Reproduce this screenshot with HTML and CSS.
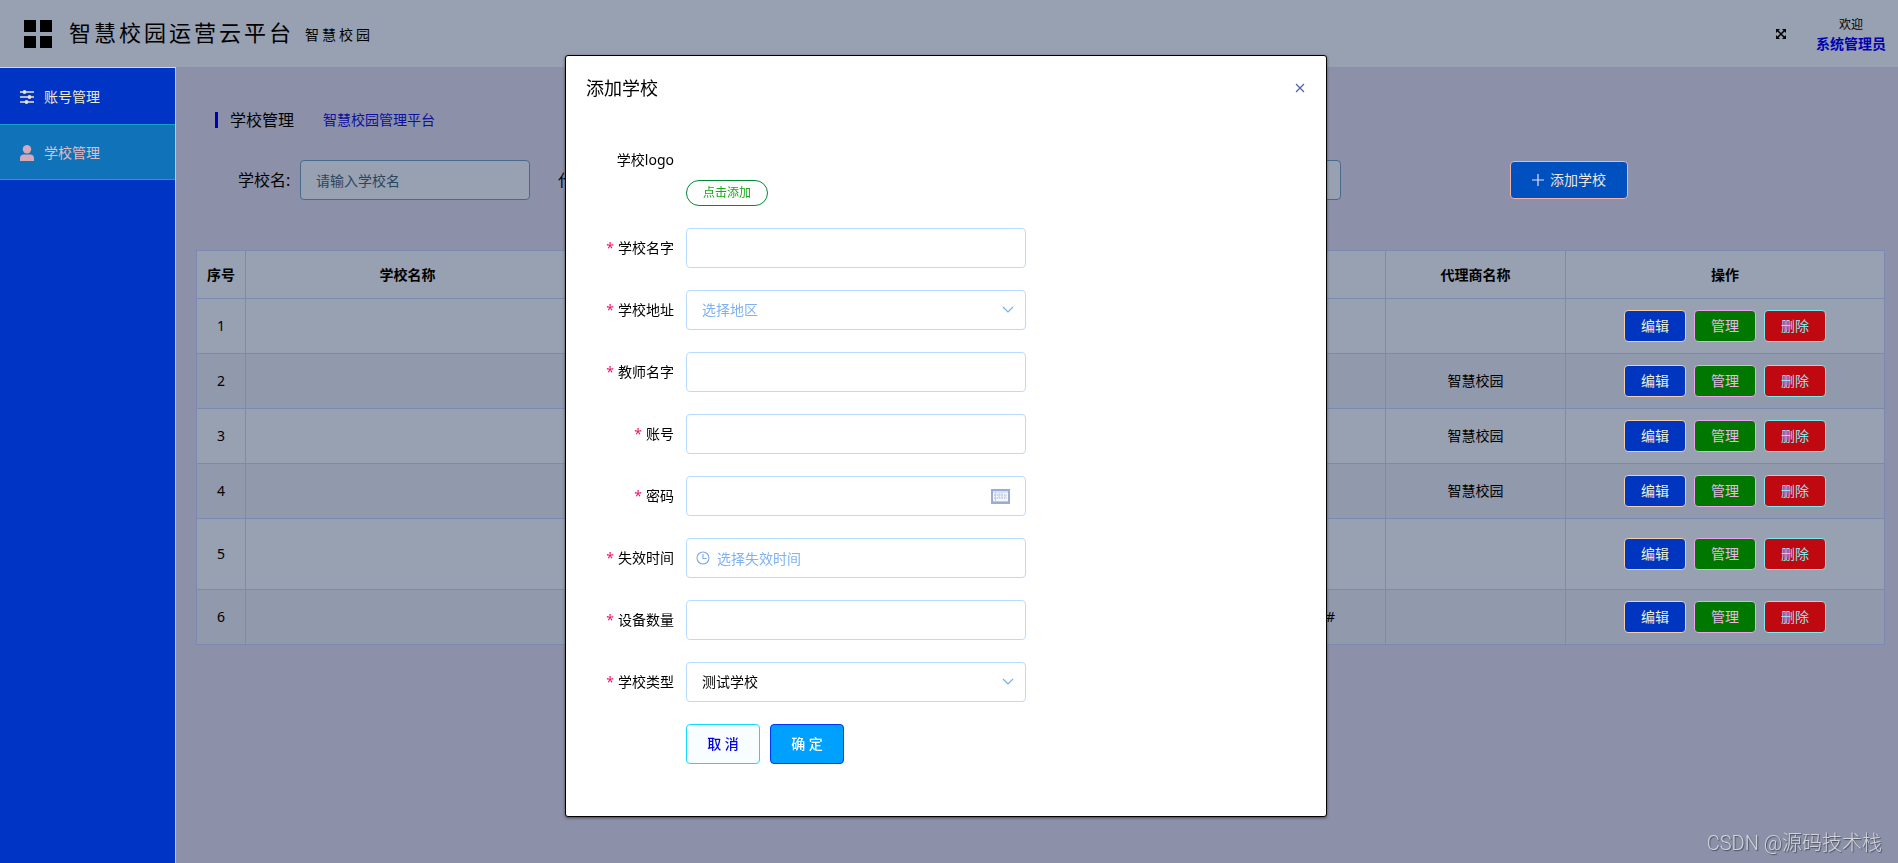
FILE: index.html
```html
<!DOCTYPE html>
<html lang="zh-CN">
<head>
<meta charset="utf-8">
<title>智慧校园运营云平台</title>
<link rel="stylesheet" href="styles.css">
</head>
<body>
<div class="app">
  <header class="topbar">
    <svg class="logo" viewBox="0 0 28 28" aria-hidden="true"><path d="M0 0h12v12H0zM16 0h12v12H16zM0 16h12v12H0zM16 16h12v12H16z"/></svg>
    <h1 class="brand">智慧校园运营云平台</h1>
    <span class="brand-sub">智慧校园</span>
    <div class="user-area">
      <button class="icon-btn" type="button" aria-label="全屏">
        <svg class="full-icon" viewBox="0 0 10 10" aria-hidden="true"><path d="M1 1l8 8M9 1L1 9" stroke="#000" stroke-width="1.5"/><path d="M0 0h4L0 4zM10 0v4L6 0zM0 10V6l4 4zM10 10H6l4-4z"/></svg>
      </button>
      <div class="user">
        <span class="welcome">欢迎</span>
        <a class="user-name" href="#">系统管理员</a>
      </div>
    </div>
  </header>
  <nav class="sidebar">
    <a class="nav-item" href="#">
      <svg class="nav-icon" viewBox="0 0 14 14" aria-hidden="true"><path d="M0 2h14M0 7h14M0 12h14" stroke="#eee5c8" stroke-width="1.3"/><circle cx="4.500" cy="2" r="1.900" fill="#eee5c8"/><circle cx="9.500" cy="7" r="1.900" fill="#eee5c8"/><circle cx="6.500" cy="12" r="1.900" fill="#eee5c8"/></svg>
      账号管理
    </a>
    <a class="nav-item active" href="#">
      <svg class="nav-icon" viewBox="0 0 14 16" aria-hidden="true"><circle cx="7" cy="4.300" r="4.200" fill="#d5a9b8"/><path d="M0 16v-2.500Q0 9.500 4 9.500h6q4 0 4 4V16z" fill="#d5a9b8"/></svg>
      学校管理
    </a>
  </nav>
  <main class="content">
    <div class="page-head">
      <h2 class="page-title">学校管理</h2>
      <a class="page-link" href="#">智慧校园管理平台</a>
    </div>
    <form class="filters">
      <label class="filter-label" for="f-school">学校名:</label>
      <input class="filter-input" id="f-school" type="text" placeholder="请输入学校名">
      <label class="filter-label second" for="f-agent">代理商:</label>
      <input class="filter-input grow" id="f-agent" type="text">
      <button class="add-btn" type="button">
        <svg class="plus-icon" viewBox="0 0 12 12" aria-hidden="true"><path d="M6 0v12M0 6h12" stroke="#e6e0ee" stroke-width="1.2"/></svg>
        添加学校
      </button>
    </form>
    <table class="schools">
      <colgroup><col class="c-index"><col class="c-name"><col><col><col><col class="c-agent"><col class="c-ops"></colgroup>
      <thead><tr><th>序号</th><th>学校名称</th><th></th><th></th><th></th><th>代理商名称</th><th>操作</th></tr></thead>
      <tbody>
        <tr><td>1</td><td></td><td></td><td></td><td></td><td></td><td><div class="ops"><button class="op edit" type="button">编辑</button><button class="op manage" type="button">管理</button><button class="op delete" type="button">删除</button></div></td></tr>
        <tr><td>2</td><td></td><td></td><td></td><td></td><td>智慧校园</td><td><div class="ops"><button class="op edit" type="button">编辑</button><button class="op manage" type="button">管理</button><button class="op delete" type="button">删除</button></div></td></tr>
        <tr><td>3</td><td></td><td></td><td></td><td></td><td>智慧校园</td><td><div class="ops"><button class="op edit" type="button">编辑</button><button class="op manage" type="button">管理</button><button class="op delete" type="button">删除</button></div></td></tr>
        <tr><td>4</td><td></td><td></td><td></td><td></td><td>智慧校园</td><td><div class="ops"><button class="op edit" type="button">编辑</button><button class="op manage" type="button">管理</button><button class="op delete" type="button">删除</button></div></td></tr>
        <tr class="tall"><td>5</td><td></td><td></td><td></td><td></td><td></td><td><div class="ops"><button class="op edit" type="button">编辑</button><button class="op manage" type="button">管理</button><button class="op delete" type="button">删除</button></div></td></tr>
        <tr><td>6</td><td></td><td></td><td></td><td class="note">#</td><td></td><td><div class="ops"><button class="op edit" type="button">编辑</button><button class="op manage" type="button">管理</button><button class="op delete" type="button">删除</button></div></td></tr>
      </tbody>
    </table>
  </main>
</div>

<div class="overlay">
  <section class="dialog" role="dialog" aria-labelledby="dlg-title">
    <div class="dialog-head">
      <h2 class="dialog-title" id="dlg-title">添加学校</h2>
      <button class="icon-btn" type="button" aria-label="关闭">
        <svg class="close-icon" viewBox="0 0 10 10" aria-hidden="true"><path d="M1 1l8 8M9 1L1 9" stroke="#4d62a8" stroke-width="1.200"/></svg>
      </button>
    </div>
    <form class="form">
      <div class="row">
        <label class="label" for="logo">学校logo</label>
        <div class="logo-field"><button class="pill" id="logo" type="button">点击添加</button></div>
      </div>
      <div class="row">
        <label class="label required" for="name">学校名字</label>
        <input class="field" id="name" type="text">
      </div>
      <div class="row">
        <label class="label required" for="area">学校地址</label>
        <div class="control">
          <select class="field empty" id="area"><option>选择地区</option></select>
          <svg class="chevron" viewBox="0 0 12 8" aria-hidden="true"><path d="M1 1l5 5 5-5" fill="none" stroke="#72aef2" stroke-width="1.200"/></svg>
        </div>
      </div>
      <div class="row">
        <label class="label required" for="teacher">教师名字</label>
        <input class="field" id="teacher" type="text">
      </div>
      <div class="row">
        <label class="label required" for="account">账号</label>
        <input class="field" id="account" type="text">
      </div>
      <div class="row">
        <label class="label required" for="password">密码</label>
        <div class="control">
          <input class="field" id="password" type="password">
          <svg class="keyboard" viewBox="0 0 19 15" aria-hidden="true"><path d="M1 1h17v13H1z" fill="#f5f7ff" stroke="#9dabd2" stroke-width="2"/><path d="M2 3h15M2 12.500h15" stroke="#bcc7e8"/><path d="M3 6h13M3 9h13" stroke="#bac5ea" stroke-width="1.500" stroke-dasharray="1.500 1"/><path d="M4.500 3v9M8 4v5M11 4v5M14 6v3" stroke="#c3ccec"/></svg>
        </div>
      </div>
      <div class="row">
        <label class="label required" for="expire">失效时间</label>
        <div class="control">
          <input class="field with-icon" id="expire" type="text" placeholder="选择失效时间">
          <svg class="clock" viewBox="0 0 14 14" fill="none" stroke="#7da9ee" stroke-width="1.100" aria-hidden="true"><circle cx="7" cy="7" r="6"/><path d="M7 3v4.500h3.500"/></svg>
        </div>
      </div>
      <div class="row">
        <label class="label required" for="devices">设备数量</label>
        <input class="field" id="devices" type="text">
      </div>
      <div class="row">
        <label class="label required" for="type">学校类型</label>
        <div class="control">
          <select class="field" id="type"><option>测试学校</option></select>
          <svg class="chevron" viewBox="0 0 12 8" aria-hidden="true"><path d="M1 1l5 5 5-5" fill="none" stroke="#72aef2" stroke-width="1.200"/></svg>
        </div>
      </div>
      <div class="actions">
        <button class="btn cancel" type="button">取 消</button>
        <button class="btn confirm" type="button">确 定</button>
      </div>
    </form>
  </section>
</div>
<div class="watermark">CSDN @源码技术栈</div>
</body>
</html>
```
FILE: styles.css
```css
* { box-sizing: border-box; }
body {
  margin: 0;
  background: #8c90a8;
  color: #000;
  font: 14px/20px "Noto Sans", "Noto Sans CJK SC", sans-serif;
}
button, input, select { font: inherit; margin: 0; }
h1, h2 { margin: 0; font-weight: 400; }
a { text-decoration: none; }
svg { display: block; flex: none; }

.app {
  display: grid;
  grid-template: 68px 1fr / 176px 1fr;
  min-height: 100vh;
}

/* Top bar */
.topbar {
  grid-column: 1 / -1;
  display: flex;
  align-items: center;
  padding: 0 12px 0 24px;
  background: #97a1b2;
  border-bottom: 1px solid #8a90ac;
}
.logo { width: 28px; height: 28px; }
.brand {
  margin-left: 17px;
  padding-bottom: 4px;
  font-size: 22px;
  line-height: 32px;
  letter-spacing: 3px;
}
.brand-sub { margin-left: 11px; padding-top: 2px; letter-spacing: 3px; }
.user-area {
  display: flex;
  align-items: center;
  gap: 26px;
  margin-left: auto;
}
.icon-btn { padding: 4px; border: 0; background: none; }
.full-icon, .close-icon { width: 10px; height: 10px; }
.user { display: flex; flex-direction: column; align-items: center; }
.welcome { font-size: 12px; }
.user-name { color: #0000b4; font-weight: 700; line-height: 18px; }

/* Side navigation */
.sidebar {
  background: #0034c4;
  border-right: 1px solid #d9bcc6;
  box-shadow: 0 -1px #e4d2cf;
}
.nav-item {
  display: flex;
  align-items: center;
  gap: 10px;
  height: 56px;
  padding: 2px 0 0 20px;
  color: #eee8cc;
}
.nav-item.active {
  background: #1072b8;
  border-top: 1px solid #16a0c4;
  border-bottom: 1px solid #16a0c4;
  color: #e2bcc4;
}
.nav-icon { width: 14px; height: 16px; }

/* Page */
.content { padding: 40px 13px 0 20px; }
.page-head {
  display: flex;
  align-items: center;
  gap: 29px;
  padding-left: 19px;
  height: 24px;
}
.page-title {
  display: flex;
  align-items: center;
  gap: 12px;
  font-size: 16px;
}
.page-title::before { content: ""; width: 3px; height: 16px; background: #0000b4; }
.page-link { color: #0a10a0; }

.filters {
  display: flex;
  align-items: center;
  height: 40px;
  margin: 28px 0 50px;
  padding: 0 257px 0 42px;
}
.filter-label { width: 62px; flex: none; font-size: 16px; white-space: nowrap; }
.filter-label.second { margin-left: 28px; }
.filter-input {
  width: 230px;
  height: 40px;
  padding: 0 15px;
  border: 1px solid #476b8c;
  border-radius: 4px;
  background: #97a1b2;
  color: #000;
}
.filter-input::placeholder { color: #2c4560; opacity: 1; }
.filter-input.grow { flex: 1; min-width: 0; }
.add-btn {
  display: flex;
  align-items: center;
  gap: 6px;
  height: 38px;
  margin-left: 169px;
  padding: 0 21px;
  border: 1px solid #f0b4ac;
  border-radius: 4px;
  background: #0050c0;
  color: #eee6dc;
  white-space: nowrap;
}
.plus-icon { width: 12px; height: 12px; }

.schools {
  width: 100%;
  table-layout: fixed;
  border-collapse: collapse;
  text-align: center;
}
.c-index { width: 49px; }
.c-name { width: 324px; }
.c-agent { width: 180px; }
.c-ops { width: 319px; }
.schools th, .schools td { padding: 0; border: 1px solid #7c8ab2; }
.schools tr { height: 55px; background: #97a1b2; }
.schools thead tr { height: 48px; }
.schools tbody tr:nth-child(even) { background: #9199ad; }
.schools tbody .tall { height: 71px; }
.schools .note { padding-right: 50px; text-align: right; }
.ops { display: flex; justify-content: center; gap: 8px; }
.op {
  width: 62px;
  height: 32px;
  padding: 0;
  border: 1px solid;
  border-radius: 4px;
}
.edit { background: #0035c0; border-color: #f4cfae; color: #eef0d4; }
.manage { background: #007800; border-color: #eea4ee; color: #eab8e6; }
.delete { background: #c00810; border-color: #78eef0; color: #8ce6ee; }

/* Dialog */
.overlay {
  position: fixed;
  inset: 0;
  display: flex;
  justify-content: center;
  align-items: flex-start;
  padding: 55px 6px 0 0;
  overflow: auto;
}
.dialog {
  width: 762px;
  max-width: 100%;
  padding-bottom: 52px;
  background: #fff;
  border: 1px solid #000;
  border-radius: 3px;
  box-shadow: 0 1px 3px rgba(0, 0, 0, 0.5);
}
.dialog-head {
  display: flex;
  align-items: center;
  justify-content: space-between;
  padding: 20px 17px 10px 20px;
}
.dialog-title { font-size: 18px; line-height: 24px; }
.form {
  display: flex;
  flex-direction: column;
  gap: 22px;
  width: 460px;
  padding-top: 30px;
}
.row { display: grid; grid-template-columns: 120px 1fr; }
.label { padding-right: 12px; line-height: 40px; text-align: right; }
.required::before { content: "*"; margin-right: 4px; color: #f0106a; }
.logo-field { padding-top: 40px; }
.pill {
  display: block;
  width: 82px;
  height: 26px;
  padding: 0;
  border: 1px solid #008a38;
  border-radius: 13px;
  background: #fff;
  color: #14a814;
  font-size: 12px;
}
.control { display: grid; align-items: center; }
.control > * { grid-area: 1 / 1; }
.field {
  width: 100%;
  height: 40px;
  padding: 0 15px;
  border: 1px solid #b8dcff;
  border-radius: 4px;
  background: #fff;
  color: #000;
  appearance: none;
}
.field.empty { color: #80b2f2; }
.field::placeholder { color: #80b2f2; opacity: 1; }
.with-icon { padding-left: 30px; }
.chevron, .keyboard { justify-self: end; pointer-events: none; }
.chevron { width: 12px; height: 8px; margin-right: 12px; }
.keyboard { width: 19px; height: 15px; margin-right: 16px; }
.clock { width: 14px; height: 14px; margin-left: 10px; }
.actions { display: flex; gap: 10px; padding-left: 120px; }
.btn {
  width: 74px;
  height: 40px;
  padding: 0;
  border: 1px solid;
  border-radius: 4px;
  font-weight: 500;
}
.cancel { background: #f8fdff; border-color: #14dcff; color: #0000e0; }
.confirm { background: #00a0ff; border-color: #0034ff; color: #fff; }

.watermark {
  position: fixed;
  right: 16px;
  bottom: 6px;
  color: #d2d4da;
  font: 20px/28px Roboto, "Noto Sans CJK SC", sans-serif;
  font-weight: 300;
  text-shadow: 1px 1px 1px #4c5060;
}
```
